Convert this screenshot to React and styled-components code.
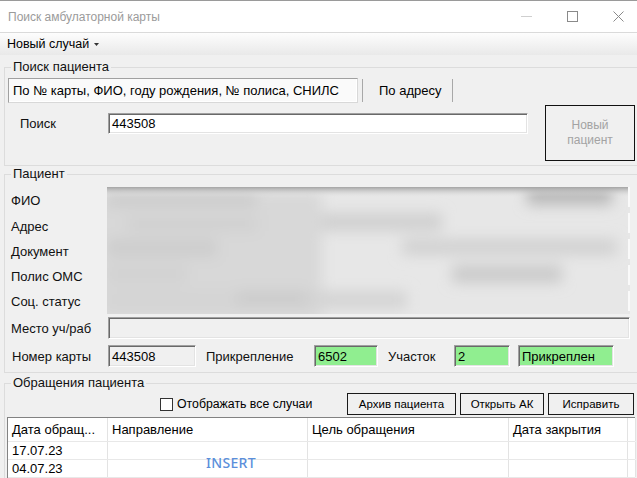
import React from 'react';
import styled, { createGlobalStyle } from 'styled-components';

const Global = createGlobalStyle`
  html, body { margin: 0; padding: 0; background: #f0f0f0; }
  body { font-family: "Liberation Sans", Arial, sans-serif; font-size: 13px; color: #000; }
  * { box-sizing: border-box; }
`;

const Window = styled.div`
  width: 637px;
  height: 478px;
  overflow: hidden;
  background: #f0f0f0;
  display: flex;
  flex-direction: column;
`;

const TitleBar = styled.div`
  flex: 0 0 33px;
  height: 33px;
  background: #fff;
  border-top: 1px solid #9a9a9a;
  border-bottom: 1px solid #dadada;
  display: flex;
  align-items: center;
  padding-left: 8px;
`;

const Title = styled.div`
  flex: 1;
  font-size: 12px;
  color: #9b9b9b;
`;

const Controls = styled.div`
  display: flex;
  height: 100%;
  margin-right: -4px;
`;

const Ctrl = styled.div`
  width: 46px;
  display: flex;
  align-items: center;
  justify-content: center;
`;

const MenuBar = styled.div`
  flex: 0 0 22px;
  height: 22px;
  background: linear-gradient(#fdfdfd, #e9e9e9);
  display: flex;
  align-items: center;
  padding-left: 7px;
`;

const MenuItem = styled.div`
  font-size: 12.5px;
  display: flex;
  align-items: center;
  gap: 5px;
`;

const Content = styled.div`
  padding-left: 4px;
  display: flex;
  flex-direction: column;
`;

const Group = styled.div`
  position: relative;
  width: 660px;
  margin-top: ${p => p.$mt}px;
  border: 1px solid #dcdcdc;
  padding: ${p => p.$pad};
`;

const Legend = styled.span`
  position: absolute;
  top: -9px;
  left: 6px;
  padding: 0 2px;
  background: #f0f0f0;
  font-size: 13px;
  line-height: 16px;
  color: #111;
`;

const TabStrip = styled.div`
  display: flex;
  height: 25px;
`;

const TabActive = styled.div`
  width: 350px;
  display: flex;
  align-items: center;
  padding-left: 4px;
  background: #fafafa;
  border: 1px solid;
  border-color: #a0a0a0 #d8d8d8 #d8d8d8 #a0a0a0;
  box-shadow: inset -1px -1px 0 #fff;
  white-space: nowrap;
`;

const TabSep = styled.div`
  width: 1px;
  margin: 1px ${p => p.$mx}px;
  background: #a8a8a8;
`;

const Tab = styled.div`
  display: flex;
  align-items: center;
  padding: 0 11px 0 12px;
  white-space: nowrap;
`;

const SearchRow = styled.div`
  display: flex;
  align-items: flex-start;
  margin-top: 2px;
`;

const SearchField = styled.div`
  display: flex;
  align-items: center;
  margin-top: 8px;
  padding-left: 12px;
`;

const Label = styled.div`
  width: ${p => p.$w}px;
  margin-left: ${p => p.$ml || 0}px;
  flex: 0 0 auto;
  white-space: nowrap;
  color: #111;
`;

const Field = styled.div`
  width: ${p => p.$w}px;
  height: ${p => p.$h || 22}px;
  margin-left: ${p => p.$ml || 0}px;
  flex: 0 0 auto;
  background: ${p => p.$bg || '#fff'};
  border: 1px solid;
  border-color: #a0a0a0 #fff #fff #a0a0a0;
  box-shadow: inset 1px 1px 0 #696969, inset -1px -1px 0 #e3e3e3;
  display: flex;
  align-items: center;
  padding-left: 3px;
  white-space: nowrap;
  overflow: hidden;
`;

const NewPatient = styled.div`
  width: 90px;
  height: 56px;
  margin-left: 17px;
  border: 1px solid #111;
  color: #a3a3a3;
  font-size: 12px;
  line-height: 15px;
  text-align: center;
  display: flex;
  align-items: center;
  justify-content: center;
`;

const PatientGrid = styled.div`
  display: grid;
  grid-template-columns: 102px 523px;
  grid-template-rows: 26px 26px 25px 25px 25px;
`;

const GridLabel = styled.div`
  padding-left: 6px;
  display: flex;
  align-items: center;
  color: #111;
`;

const Blurred = styled.div`
  grid-column: 2;
  grid-row: 1 / span 5;
  overflow: hidden;
`;

const PlaceRow = styled.div`
  display: flex;
  align-items: center;
  margin-top: 3px;
  padding-left: 6px;
`;

const CardRow = styled.div`
  display: flex;
  align-items: center;
  margin-top: 6px;
  padding-left: 7px;
`;

const Toolbar = styled.div`
  display: flex;
  align-items: center;
  height: 22px;
`;

const CheckArea = styled.label`
  flex: 0 0 342px;
  display: flex;
  align-items: center;
  padding-left: 155px;
  font-size: 12.3px;
  white-space: nowrap;
`;

const CheckBox = styled.span`
  width: 13px;
  height: 13px;
  border: 1px solid #333;
  background: #fff;
  margin-right: 4px;
  flex: 0 0 auto;
`;

const Btn = styled.div`
  width: ${p => p.$w}px;
  height: 22px;
  margin-left: ${p => p.$ml || 0}px;
  border: 1px solid #1a1a1a;
  background: #f0f0f0;
  font-size: 11.5px;
  display: flex;
  align-items: center;
  justify-content: center;
  flex: 0 0 auto;
  white-space: nowrap;
`;

const Table = styled.div`
  position: relative;
  width: 628px;
  height: 70px;
  margin: 2px 0 0 2px;
  background: #fff;
  border-top: 1px solid #828282;
  border-left: 1px solid #828282;
  display: flex;
  flex-direction: column;
`;

const Row = styled.div`
  display: flex;
  height: ${p => p.$h}px;
  flex: 0 0 ${p => p.$h}px;
  border-bottom: 1px solid #e8e8e8;
`;

const Cell = styled.div`
  width: ${p => p.$w}px;
  flex: 0 0 ${p => p.$w}px;
  border-right: 1px solid #e3e3e3;
  padding-left: 4px;
  display: flex;
  align-items: center;
  white-space: nowrap;
  overflow: hidden;
`;

const Insert = styled.div`
  position: absolute;
  left: 198px;
  top: 35px;
  font-family: "Noto Sans", "Open Sans", sans-serif;
  font-size: 14px;
  font-weight: 500;
  color: #5b8fdb;
  letter-spacing: 0.3px;
`;

const cols = [100, 200, 201, 119, 8];

function BlurArt() {
  return (
    <svg width="523" height="127" viewBox="0 0 523 127">
      <defs>
        <filter id="bl" x="-30%" y="-80%" width="160%" height="260%">
          <feGaussianBlur stdDeviation="7" />
        </filter>
        <linearGradient id="tg" x1="0" y1="0" x2="0" y2="1">
          <stop offset="0" stopColor="#a4a4a4" />
          <stop offset="1" stopColor="#e0e0e0" stopOpacity="0" />
        </linearGradient>
      </defs>
      <rect x="0" y="0" width="523" height="127" fill="#e7e7e7" />
      <g filter="url(#bl)">
        <rect x="-20" y="5" width="235" height="130" fill="#d8d8d8" />
        <rect x="0" y="4" width="150" height="16" fill="#cccccc" />
        <rect x="420" y="-4" width="85" height="22" fill="#bababa" />
        <rect x="215" y="26" width="120" height="18" fill="#d0d0d0" />
        <rect x="20" y="30" width="130" height="14" fill="#d0d0d0" />
        <rect x="0" y="52" width="110" height="18" fill="#cdcdcd" />
        <rect x="295" y="52" width="215" height="16" fill="#d1d1d1" />
        <rect x="345" y="78" width="110" height="18" fill="#cbcbcb" />
        <rect x="0" y="78" width="80" height="18" fill="#d2d2d2" />
        <rect x="0" y="104" width="300" height="18" fill="#d4d4d4" />
        <rect x="130" y="104" width="70" height="14" fill="#cbcbcb" />
      </g>
      <rect x="0" y="0" width="523" height="10" fill="url(#tg)" />
      <rect x="521" y="0" width="2" height="20" fill="#fafafa" />
      <rect x="521" y="26" width="2" height="20" fill="#fafafa" />
      <rect x="521" y="52" width="2" height="20" fill="#fafafa" />
      <rect x="521" y="78" width="2" height="20" fill="#fafafa" />
      <rect x="521" y="104" width="2" height="20" fill="#fafafa" />
    </svg>
  );
}

export default function App() {
  return (
    <>
      <Global />
      <Window>
        <TitleBar>
          <Title>Поиск амбулаторной карты</Title>
          <Controls>
            <Ctrl>
              <svg width="11" height="11" viewBox="0 0 11 11"><path d="M0 5.5H11" stroke="#cfcfcf" strokeWidth="1" /></svg>
            </Ctrl>
            <Ctrl>
              <svg width="11" height="11" viewBox="0 0 11 11"><rect x="0.5" y="0.5" width="10" height="10" fill="none" stroke="#8a8a8a" strokeWidth="1" /></svg>
            </Ctrl>
            <Ctrl>
              <svg width="11" height="11" viewBox="0 0 11 11"><path d="M0.5 0.5L10.5 10.5M10.5 0.5L0.5 10.5" stroke="#8a8a8a" strokeWidth="1" /></svg>
            </Ctrl>
          </Controls>
        </TitleBar>
        <MenuBar>
          <MenuItem>
            Новый случай
            <svg width="5" height="3" viewBox="0 0 5 3"><path d="M0 0H5L2.5 3Z" fill="#333" /></svg>
          </MenuItem>
        </MenuBar>
        <Content>
          <Group $mt={12} $pad="10px 0 4px 3px">
            <Legend>Поиск пациента</Legend>
            <TabStrip>
              <TabActive>По № карты, ФИО, году рождения, № полиса, СНИЛС</TabActive>
              <TabSep $mx={4} />
              <Tab>По адресу</Tab>
              <TabSep $mx={0} />
            </TabStrip>
            <SearchRow>
              <SearchField>
                <Label $w={88}>Поиск</Label>
                <Field $w={420} $h={21}>443508</Field>
              </SearchField>
              <NewPatient>Новый<br />пациент</NewPatient>
            </SearchRow>
          </Group>

          <Group $mt={8} $pad="12px 0 5px 0">
            <Legend>Пациент</Legend>
            <PatientGrid>
              <GridLabel>ФИО</GridLabel>
              <Blurred><BlurArt /></Blurred>
              <GridLabel>Адрес</GridLabel>
              <GridLabel>Документ</GridLabel>
              <GridLabel>Полис ОМС</GridLabel>
              <GridLabel>Соц. статус</GridLabel>
            </PatientGrid>
            <PlaceRow>
              <Label $w={97}>Место уч/раб</Label>
              <Field $w={522} $bg="#f0f0f0" />
            </PlaceRow>
            <CardRow>
              <Label $w={96}>Номер карты</Label>
              <Field $w={88} $bg="#f0f0f0">443508</Field>
              <Label $w={108} $ml={10}>Прикрепление</Label>
              <Field $w={64} $bg="#90ee90">6502</Field>
              <Label $w={66} $ml={10}>Участок</Label>
              <Field $w={56} $bg="#90ee90">2</Field>
              <Field $w={96} $ml={8} $bg="#90ee90">Прикреплен</Field>
            </CardRow>
          </Group>

          <Group $mt={10} $pad="9px 0 0 0">
            <Legend>Обращения пациента</Legend>
            <Toolbar>
              <CheckArea>
                <CheckBox />
                Отображать все случаи
              </CheckArea>
              <Btn $w={109}>Архив пациента</Btn>
              <Btn $w={84} $ml={4}>Открыть АК</Btn>
              <Btn $w={86} $ml={4}>Исправить</Btn>
            </Toolbar>
            <Table>
              <Row $h={24}>
                <Cell $w={cols[0]}>Дата обращ...</Cell>
                <Cell $w={cols[1]}>Направление</Cell>
                <Cell $w={cols[2]}>Цель обращения</Cell>
                <Cell $w={cols[3]}>Дата закрытия</Cell>
                <Cell $w={cols[4]} />
              </Row>
              <Row $h={18}>
                <Cell $w={cols[0]}>17.07.23</Cell>
                <Cell $w={cols[1]} />
                <Cell $w={cols[2]} />
                <Cell $w={cols[3]} />
                <Cell $w={cols[4]} />
              </Row>
              <Row $h={18}>
                <Cell $w={cols[0]}>04.07.23</Cell>
                <Cell $w={cols[1]} />
                <Cell $w={cols[2]} />
                <Cell $w={cols[3]} />
                <Cell $w={cols[4]} />
              </Row>
              <Insert>INSERT</Insert>
            </Table>
          </Group>
        </Content>
      </Window>
    </>
  );
}
